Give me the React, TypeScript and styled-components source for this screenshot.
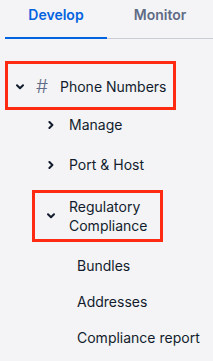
import React from 'react';
import styled, { createGlobalStyle } from 'styled-components';

const GlobalStyle = createGlobalStyle`
  html, body {
    margin: 0;
    padding: 0;
    background: #f4f4f6;
  }
  body {
    font-family: Inter, 'Noto Sans', Arial, sans-serif;
    color: #121c2d;
    -webkit-font-smoothing: antialiased;
  }
`;

const StyledSidebar = styled.nav<{}>`
  width: 213px;
  height: 361px;
  padding-left: 5px;
  box-sizing: border-box;
  overflow: hidden;
`;

const StyledTabList = styled.div<{}>`
  display: flex;
  border-bottom: 1px solid #cacdd8;
  height: 38px;
`;

const StyledTab = styled.button<{ $active?: boolean }>`
  flex: ${p => (p.$active ? '0 0 102px' : '1 1 auto')};
  height: 39px;
  margin-bottom: -1px;
  padding: 5px 0 0;
  box-sizing: border-box;
  align-self: flex-start;
  display: flex;
  justify-content: center;
  align-items: flex-start;
  background: none;
  border: none;
  border-bottom: 2px solid ${p => (p.$active ? '#0263e0' : 'transparent')};
  font-family: inherit;
  font-size: 14px;
  line-height: 20px;
  font-weight: 600;
  color: ${p => (p.$active ? '#0263e0' : '#606b85')};
  cursor: pointer;
`;

const StyledTree = styled.ul<{}>`
  list-style: none;
  margin: 22px 0 0;
  padding: 0;
`;

const StyledBranch = styled.ul<{ $indent: number; $top: number }>`
  list-style: none;
  margin: 0;
  padding: ${p => p.$top}px 0 0 ${p => p.$indent}px;
`;

const StyledRow = styled.div<{ $highlight?: boolean; $width?: number }>`
  display: flex;
  align-items: center;
  box-sizing: border-box;
  width: ${p => (p.$width ? `${p.$width}px` : 'auto')};
  border: 3px solid ${p => (p.$highlight ? '#ff2a12' : 'transparent')};
  font-size: 14px;
  cursor: pointer;
`;

const StyledTopRow = styled(StyledRow)`
  padding: 13px 0 10px 6px;
  line-height: 20px;
`;

const StyledChildRow = styled(StyledRow)<{ $twoLine?: boolean }>`
  padding: ${p => (p.$twoLine ? '4px 14px 4px 10px' : '2px 0 12px 10px')};
  line-height: ${p => (p.$twoLine ? '19px' : '20px')};
`;

const StyledLeaf = styled.li<{}>`
  padding: 8px 0;
  font-size: 14px;
  line-height: 20px;
  cursor: pointer;
`;

const StyledChevron = styled.span<{}>`
  flex: 0 0 12px;
  display: flex;
  justify-content: center;
  align-items: center;
  color: #121c2d;
`;

const StyledHash = styled.span<{}>`
  flex: 0 0 16px;
  margin-left: 8px;
  text-align: center;
  font-size: 19px;
  font-weight: 300;
  line-height: 20px;
  color: #606b85;
`;

const StyledLabel = styled.span<{ $gap: number }>`
  margin-left: ${p => p.$gap}px;
`;

const Chevron = ({ open }: { open: boolean }) => (
  <StyledChevron>
    {open ? (
      <svg width="8" height="6" viewBox="0 0 8 6" fill="none">
        <path d="M1 1.2 4 4.2 7 1.2" stroke="currentColor" strokeWidth="2" strokeLinecap="round" strokeLinejoin="round" />
      </svg>
    ) : (
      <svg width="6" height="8" viewBox="0 0 6 8" fill="none">
        <path d="M1.4 1 4.4 4 1.4 7" stroke="currentColor" strokeWidth="2" strokeLinecap="round" strokeLinejoin="round" />
      </svg>
    )}
  </StyledChevron>
);

const App = () => (
  <>
    <GlobalStyle />
    <StyledSidebar>
      <StyledTabList>
        <StyledTab $active>Develop</StyledTab>
        <StyledTab>Monitor</StyledTab>
      </StyledTabList>
      <StyledTree>
        <li>
          <StyledTopRow $highlight $width={171}>
            <Chevron open />
            <StyledHash>#</StyledHash>
            <StyledLabel $gap={10}>Phone Numbers</StyledLabel>
          </StyledTopRow>
          <StyledBranch $indent={27} $top={0}>
            <li>
              <StyledChildRow>
                <Chevron open={false} />
                <StyledLabel $gap={12}>Manage</StyledLabel>
              </StyledChildRow>
            </li>
            <li>
              <StyledChildRow>
                <Chevron open={false} />
                <StyledLabel $gap={12}>Port &amp; Host</StyledLabel>
              </StyledChildRow>
            </li>
            <li>
              <StyledChildRow $highlight $twoLine $width={131}>
                <Chevron open />
                <StyledLabel $gap={12}>Regulatory Compliance</StyledLabel>
              </StyledChildRow>
              <StyledBranch $indent={45} $top={6}>
                <StyledLeaf>Bundles</StyledLeaf>
                <StyledLeaf>Addresses</StyledLeaf>
                <StyledLeaf>Compliance report</StyledLeaf>
              </StyledBranch>
            </li>
          </StyledBranch>
        </li>
      </StyledTree>
    </StyledSidebar>
  </>
);

export default App;
